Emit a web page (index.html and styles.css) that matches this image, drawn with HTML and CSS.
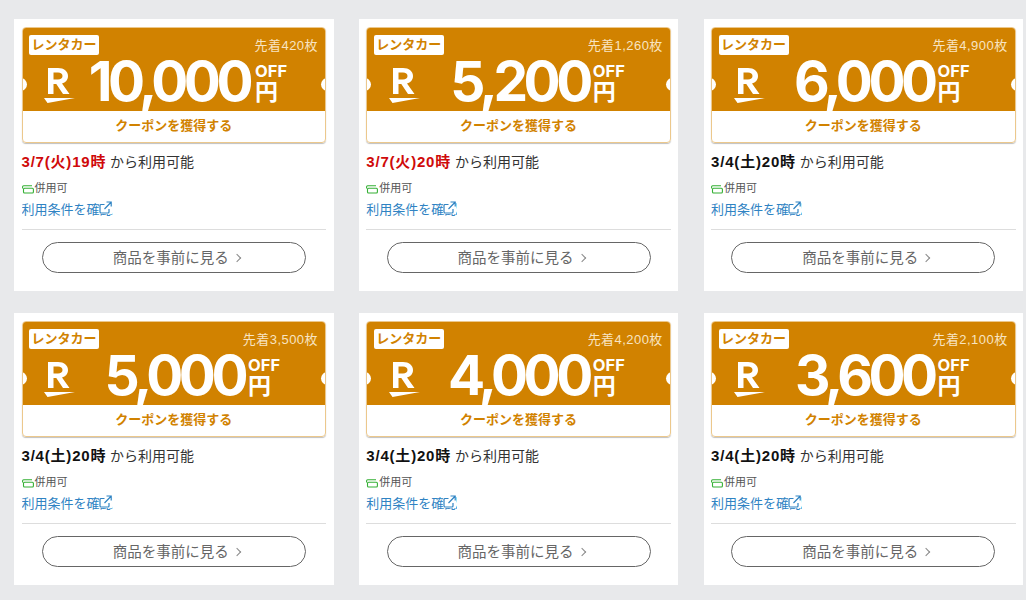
FILE: index.html
```html
<!DOCTYPE html>
<html lang="ja">
<head>
<meta charset="utf-8">
<title>クーポン</title>
<link rel="stylesheet" href="styles.css">
</head>
<body>
<svg class="defs" width="0" height="0" aria-hidden="true">
  <symbol id="r-logo" viewBox="0 0 32 35">
    <path d="M0 30 H31 L3.500 35 Z M4 0 H14 C20 0 24 3.500 24 8 C24 12 21.500 14.500 18 15.500 L25.500 26 H19 L12.300 16 H9.500 V26 H4 Z M9.500 4.500 V11.500 H14 C16.800 11.500 18.500 10 18.500 8 C18.500 6 16.800 4.500 14 4.500 Z" fill="#fff" fill-rule="evenodd"/>
  </symbol>
  <symbol id="stack" viewBox="0 0 12 9">
    <path d="M.6 3.500 V1.800 Q.6 .8 1.600 .8 H10 M2.500 3.200 H10.400 Q11.400 3.200 11.400 4.200 V7 Q11.400 8 10.400 8 H2.500 Q1.500 8 1.500 7 V4.200 Q1.500 3.200 2.500 3.200 Z" fill="none" stroke="#35b035" stroke-width="1.100"/>
  </symbol>
  <symbol id="external" viewBox="0 0 13 13">
    <path d="M5.500 3.500 H2 Q1 3.500 1 4.500 V11 Q1 12 2 12 H9 Q10 12 10 11 V8 M5.500 8 L11.800 1.500 M7.500 1 H12.200 V5.500" fill="none" stroke="#2f83c3" stroke-width="1.200"/>
  </symbol>
</svg>
<main class="grid">
  <article class="card">
    <div class="coupon">
      <div class="face">
        <div class="face-top"><span class="tag">レンタカー</span><span class="stock">先着420枚</span></div>
        <div class="value value-wide"><svg class="logo"><use href="#r-logo"/></svg><span class="amount">10,000</span><span class="unit"><span class="off">OFF</span><span class="yen">円</span></span></div>
      </div>
      <div class="claim">クーポンを獲得する</div>
    </div>
    <p class="date"><b class="when when-soon">3/7(火)19時</b> から利用可能</p>
    <p class="combine"><svg class="combine-icon"><use href="#stack"/></svg>併用可</p>
    <a class="terms" href="#">利用条件を確認<svg class="ext"><use href="#external"/></svg></a>
    <div class="action"><a class="preview" href="#">商品を事前に見る<span class="chev"></span></a></div>
  </article>
  <article class="card">
    <div class="coupon">
      <div class="face">
        <div class="face-top"><span class="tag">レンタカー</span><span class="stock">先着1,260枚</span></div>
        <div class="value"><svg class="logo"><use href="#r-logo"/></svg><span class="amount">5,200</span><span class="unit"><span class="off">OFF</span><span class="yen">円</span></span></div>
      </div>
      <div class="claim">クーポンを獲得する</div>
    </div>
    <p class="date"><b class="when when-soon">3/7(火)20時</b> から利用可能</p>
    <p class="combine"><svg class="combine-icon"><use href="#stack"/></svg>併用可</p>
    <a class="terms" href="#">利用条件を確認<svg class="ext"><use href="#external"/></svg></a>
    <div class="action"><a class="preview" href="#">商品を事前に見る<span class="chev"></span></a></div>
  </article>
  <article class="card">
    <div class="coupon">
      <div class="face">
        <div class="face-top"><span class="tag">レンタカー</span><span class="stock">先着4,900枚</span></div>
        <div class="value"><svg class="logo"><use href="#r-logo"/></svg><span class="amount">6,000</span><span class="unit"><span class="off">OFF</span><span class="yen">円</span></span></div>
      </div>
      <div class="claim">クーポンを獲得する</div>
    </div>
    <p class="date"><b class="when">3/4(土)20時</b> から利用可能</p>
    <p class="combine"><svg class="combine-icon"><use href="#stack"/></svg>併用可</p>
    <a class="terms" href="#">利用条件を確認<svg class="ext"><use href="#external"/></svg></a>
    <div class="action"><a class="preview" href="#">商品を事前に見る<span class="chev"></span></a></div>
  </article>
  <article class="card">
    <div class="coupon">
      <div class="face">
        <div class="face-top"><span class="tag">レンタカー</span><span class="stock">先着3,500枚</span></div>
        <div class="value"><svg class="logo"><use href="#r-logo"/></svg><span class="amount">5,000</span><span class="unit"><span class="off">OFF</span><span class="yen">円</span></span></div>
      </div>
      <div class="claim">クーポンを獲得する</div>
    </div>
    <p class="date"><b class="when">3/4(土)20時</b> から利用可能</p>
    <p class="combine"><svg class="combine-icon"><use href="#stack"/></svg>併用可</p>
    <a class="terms" href="#">利用条件を確認<svg class="ext"><use href="#external"/></svg></a>
    <div class="action"><a class="preview" href="#">商品を事前に見る<span class="chev"></span></a></div>
  </article>
  <article class="card">
    <div class="coupon">
      <div class="face">
        <div class="face-top"><span class="tag">レンタカー</span><span class="stock">先着4,200枚</span></div>
        <div class="value"><svg class="logo"><use href="#r-logo"/></svg><span class="amount">4,000</span><span class="unit"><span class="off">OFF</span><span class="yen">円</span></span></div>
      </div>
      <div class="claim">クーポンを獲得する</div>
    </div>
    <p class="date"><b class="when">3/4(土)20時</b> から利用可能</p>
    <p class="combine"><svg class="combine-icon"><use href="#stack"/></svg>併用可</p>
    <a class="terms" href="#">利用条件を確認<svg class="ext"><use href="#external"/></svg></a>
    <div class="action"><a class="preview" href="#">商品を事前に見る<span class="chev"></span></a></div>
  </article>
  <article class="card">
    <div class="coupon">
      <div class="face">
        <div class="face-top"><span class="tag">レンタカー</span><span class="stock">先着2,100枚</span></div>
        <div class="value"><svg class="logo"><use href="#r-logo"/></svg><span class="amount">3,600</span><span class="unit"><span class="off">OFF</span><span class="yen">円</span></span></div>
      </div>
      <div class="claim">クーポンを獲得する</div>
    </div>
    <p class="date"><b class="when">3/4(土)20時</b> から利用可能</p>
    <p class="combine"><svg class="combine-icon"><use href="#stack"/></svg>併用可</p>
    <a class="terms" href="#">利用条件を確認<svg class="ext"><use href="#external"/></svg></a>
    <div class="action"><a class="preview" href="#">商品を事前に見る<span class="chev"></span></a></div>
  </article>
</main>
</body>
</html>
```
FILE: styles.css
```css
* { box-sizing: border-box; }
html, body { margin: 0; height: 100%; }
body {
  background: #e8e9eb;
  font-family: "Liberation Sans", "Noto Sans CJK JP", sans-serif;
  color: #333;
  overflow: hidden;
}
.defs { position: absolute; }
.grid {
  display: grid;
  grid-template-columns: repeat(3, 319.500px);
  grid-auto-rows: 272px;
  column-gap: 25.300px;
  row-gap: 22px;
  padding: 19px 0 0 14px;
}
.card {
  background: #fff;
  padding: 8px 7.500px;
  display: flex;
  flex-direction: column;
}
.coupon {
  width: 304.500px;
  height: 116px;
  border: 1px solid #ecc88c;
  border-radius: 4px;
  box-shadow: 0 1px 1px rgba(0, 0, 0, .25);
  overflow: hidden;
  flex: none;
}
.face {
  position: relative;
  height: 84px;
  margin: -1px -1px 0;
  background: #d18200;
  color: #fff;
  padding: 8px 8px 0 7.500px;
}
.face::before, .face::after {
  content: "";
  position: absolute;
  top: 51px;
  width: 13px;
  height: 13px;
  background: #fff;
  border-radius: 50%;
}
.face::before { left: -8px; }
.face::after { right: -8px; }
.face-top {
  display: flex;
  justify-content: space-between;
  align-items: flex-start;
}
.tag {
  background: #fff;
  color: #d18200;
  border-radius: 2px;
  font-size: 13px;
  font-weight: 700;
  line-height: 20px;
  padding: 0 2.500px;
}
.stock {
  font-size: 13px;
  line-height: 20px;
  margin-top: 1px;
  letter-spacing: .45px;
  color: #f8e4c2;
}
.value {
  display: flex;
  align-items: flex-start;
  margin-top: -2px;
  padding-right: 37px;
}
.value-wide { padding-right: 30px; }
.logo {
  width: 32px;
  height: 35px;
  margin: 14px auto 0 15px;
  flex: none;
}
.amount {
  font-family: "Inter", sans-serif;
  font-weight: 700;
  font-size: 55px;
  line-height: 58px;
  letter-spacing: -4.500px;
  margin-top: -2px;
}
.unit {
  display: flex;
  flex-direction: column;
  align-items: flex-start;
  margin: 10px 0 0 4px;
  width: 33px;
}
.value-wide .unit { margin-left: 6px; }
.off {
  font-family: "Inter", sans-serif;
  font-weight: 700;
  font-size: 16.500px;
  line-height: 15px;
}
.yen {
  font-size: 23px;
  font-weight: 700;
  line-height: 27px;
}
.claim {
  height: 31px;
  font-size: 13px;
  font-weight: 700;
  line-height: 29px;
  text-align: center;
  color: #d18200;
}
.date {
  margin: 9px 0 0;
  font-size: 14px;
  line-height: 20px;
  color: #333;
  white-space: nowrap;
}
.when {
  color: #111;
  font-size: 15px;
  letter-spacing: .8px;
}
.when-soon { color: #cf0a0a; }
.combine {
  display: flex;
  align-items: center;
  margin: 8px 0 0;
  font-size: 11px;
  line-height: 16px;
  color: #555;
}
.combine-icon { width: 12px; height: 9px; margin-right: 1px; margin-top: 2px; }
.terms {
  position: relative;
  align-self: flex-start;
  margin-top: 5px;
  font-size: 13px;
  line-height: 18px;
  height: 18px;
  color: #2f83c3;
  text-decoration: none;
  width: 91px;
  white-space: nowrap;
  overflow: hidden;
}
.ext {
  position: absolute;
  left: 77px;
  top: 0;
  width: 13px;
  height: 13px;
  background: #fff;
}
.action {
  margin-top: 10px;
  border-top: 1px solid #ddd;
  padding-top: 12px;
  display: flex;
  justify-content: center;
}
.preview {
  width: 264px;
  height: 31px;
  border: 1px solid #666;
  border-radius: 16px;
  display: flex;
  align-items: center;
  justify-content: center;
  font-size: 14.500px;
  line-height: 27px;
  padding: 1px 0 0 5px;
  color: #666;
  text-decoration: none;
}
.chev {
  width: 6px;
  height: 6px;
  border-top: 1.200px solid #888;
  border-right: 1.200px solid #888;
  transform: rotate(45deg);
  margin-left: 5px;
}
```
